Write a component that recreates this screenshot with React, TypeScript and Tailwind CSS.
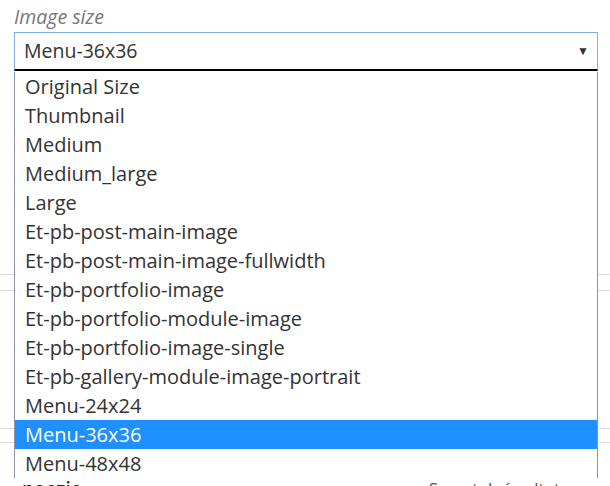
const OPTIONS = [
  "Original Size",
  "Thumbnail",
  "Medium",
  "Medium_large",
  "Large",
  "Et-pb-post-main-image",
  "Et-pb-post-main-image-fullwidth",
  "Et-pb-portfolio-image",
  "Et-pb-portfolio-module-image",
  "Et-pb-portfolio-image-single",
  "Et-pb-gallery-module-image-portrait",
  "Menu-24x24",
  "Menu-36x36",
  "Menu-48x48",
];

const SELECTED = "Menu-36x36";

export default function App() {
  return (
    <div
      className="relative h-[486px] w-[610px] overflow-hidden bg-white text-[#333]"
      style={{ fontFamily: '"Open Sans", "Noto Sans", sans-serif' }}
    >
      {/* Field label + closed select */}
      <div className="px-[12px] pt-[4px]">
        <label className="block pl-[2px] text-[19.5px] leading-[26px] italic text-[#777]">Image size</label>
        <div className="ml-[2px] mt-[2px] flex h-[39px] items-center justify-between border border-b-2 border-[#7cb0e4] border-b-black pl-[9px] pr-[8px]">
          <span className="text-[19.5px] leading-none">{SELECTED}</span>
          <span className="text-[12px] text-[#333]">▼</span>
        </div>
      </div>

      {/* Page content behind the open list */}
      <div className="mt-[203px] h-[17px] border-y border-[#dcdcdc]" />
      <div className="mt-[137px] h-[15px] border-y border-[#dcdcdc]" />
      <div className="mt-[36px] flex items-start justify-between pl-[22px] pr-[50px] text-[19px] leading-[20px]">
        <span className="font-semibold text-[#222]">poezie</span>
        <span className="text-[17px] text-[#555]">Sarvatelný sultat</span>
      </div>

      {/* Open dropdown list */}
      <ul className="absolute left-[14px] top-[72px] w-[584px] border-x border-[#8e93a8] bg-white">
        {OPTIONS.map((opt) => (
          <li
            key={opt}
            className={`h-[29px] pl-[10px] text-[20px] leading-[29px] ${
              opt === SELECTED ? "bg-[#1e90ff] text-white" : "text-[#333]"
            }`}
          >
            {opt}
          </li>
        ))}
      </ul>
    </div>
  );
}
